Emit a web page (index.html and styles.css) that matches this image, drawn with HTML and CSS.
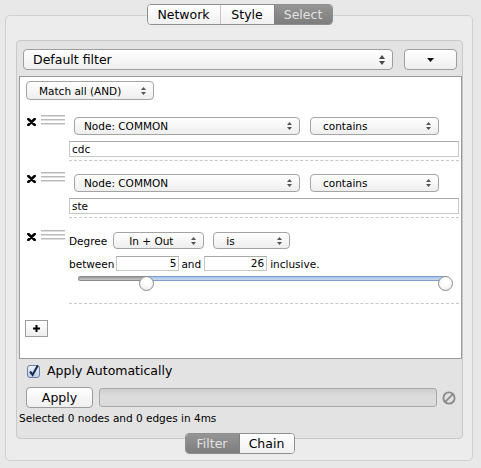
FILE: index.html
```html
<!DOCTYPE html>
<html>
<head>
<meta charset="utf-8">
<link rel="stylesheet" href="styles.css">
</head>
<body>
<div class="app">
  <div class="top-tabs">
    <div class="seg">
      <div class="seg-item w-net">Network</div>
      <div class="seg-item w-style">Style</div>
      <div class="seg-item on w-select">Select</div>
    </div>
  </div>
  <div class="outer">
    <div class="inner">
      <div class="filter-row">
        <div class="combo"><span>Default filter</span>
          <svg width="6" height="10" viewBox="0 0 6 10"><path d="M3 0L6 4H0Z M3 10L6 6H0Z" fill="#4a4a4a"/></svg>
        </div>
        <div class="menu-btn"><svg width="7" height="4" viewBox="0 0 7 4"><path d="M0 0H7L3.5 4Z" fill="#111"/></svg></div>
      </div>
      <div class="rules-box">
        <div class="select match"><span>Match all (AND)</span>
          <svg width="5" height="8" viewBox="0 0 5 8"><path d="M2.5 0L5 3H0Z M2.5 8L5 5H0Z" fill="#555"/></svg>
        </div>

        <div class="rule first">
          <div class="handle">
            <svg class="x-icon" width="9" height="8" viewBox="0 0 9 8"><path d="M1.3 1 L7.7 7 M7.7 1 L1.3 7" stroke="#000" stroke-width="2.5" stroke-linecap="round"/></svg>
            <div class="grip"></div>
          </div>
          <div class="rule-body">
            <div class="sel-line">
              <div class="select node"><span>Node: COMMON</span><svg width="5" height="8" viewBox="0 0 5 8"><path d="M2.5 0L5 3H0Z M2.5 8L5 5H0Z" fill="#555"/></svg></div>
              <div class="select contains"><span>contains</span><svg width="5" height="8" viewBox="0 0 5 8"><path d="M2.5 0L5 3H0Z M2.5 8L5 5H0Z" fill="#555"/></svg></div>
            </div>
            <div class="field">cdc</div>
          </div>
        </div>

        <div class="rule">
          <div class="handle">
            <svg class="x-icon" width="9" height="8" viewBox="0 0 9 8"><path d="M1.3 1 L7.7 7 M7.7 1 L1.3 7" stroke="#000" stroke-width="2.5" stroke-linecap="round"/></svg>
            <div class="grip"></div>
          </div>
          <div class="rule-body">
            <div class="sel-line">
              <div class="select node"><span>Node: COMMON</span><svg width="5" height="8" viewBox="0 0 5 8"><path d="M2.5 0L5 3H0Z M2.5 8L5 5H0Z" fill="#555"/></svg></div>
              <div class="select contains"><span>contains</span><svg width="5" height="8" viewBox="0 0 5 8"><path d="M2.5 0L5 3H0Z M2.5 8L5 5H0Z" fill="#555"/></svg></div>
            </div>
            <div class="field">ste</div>
          </div>
        </div>

        <div class="rule deg">
          <div class="handle">
            <svg class="x-icon" width="9" height="8" viewBox="0 0 9 8"><path d="M1.3 1 L7.7 7 M7.7 1 L1.3 7" stroke="#000" stroke-width="2.5" stroke-linecap="round"/></svg>
            <div class="grip"></div>
          </div>
          <div class="rule-body">
            <div class="deg-line">
              <span>Degree</span>
              <div class="select inout"><span>In + Out</span><svg width="5" height="8" viewBox="0 0 5 8"><path d="M2.5 0L5 3H0Z M2.5 8L5 5H0Z" fill="#555"/></svg></div>
              <div class="select is"><span>is</span><svg width="5" height="8" viewBox="0 0 5 8"><path d="M2.5 0L5 3H0Z M2.5 8L5 5H0Z" fill="#555"/></svg></div>
            </div>
            <div class="between-line">
              <span>between</span>
              <div class="num n1">5</div>
              <span class="and">and</span>
              <div class="num n2">26</div>
              <span class="incl">inclusive.</span>
            </div>
            <div class="slider">
              <div class="track">
                <div class="track-off"></div>
                <div class="track-on"></div>
              </div>
              <div class="thumb t-left"></div>
              <div class="thumb t-right"></div>
            </div>
          </div>
        </div>

        <div class="plus"><svg width="9" height="9" viewBox="0 0 9 9"><path d="M4.5 1V8 M1 4.5H8" stroke="#000" stroke-width="2"/></svg></div>
      </div>

      <div class="auto-row">
        <svg width="13" height="14" viewBox="0 0 13 14">
          <defs><linearGradient id="cbg" x1="0" y1="0" x2="0" y2="1"><stop offset="0" stop-color="#eef4fc"/><stop offset="1" stop-color="#b9cfec"/></linearGradient></defs>
          <rect x=".5" y="1.5" width="12" height="12" rx="2.5" fill="url(#cbg)" stroke="#6f7f97"/>
          <path d="M3 7.5 L5.6 10.8 L10.8 1.5" fill="none" stroke="#1b2c52" stroke-width="2.1"/>
        </svg>
        <span class="auto-label">Apply Automatically</span>
      </div>

      <div class="apply-row">
        <div class="apply-btn">Apply</div>
        <div class="progress"></div>
        <svg class="stop" width="14" height="14" viewBox="0 0 14 14"><circle cx="7" cy="7" r="5.6" fill="none" stroke="#8c8c8c" stroke-width="1.9"/><path d="M10.8 3.2 L3.2 10.8" stroke="#8c8c8c" stroke-width="1.9"/></svg>
      </div>

      <div class="status">Selected 0 nodes and 0 edges in 4ms</div>
    </div>
    <div class="bottom-tabs">
      <div class="seg">
        <div class="seg-item on w-filter">Filter</div>
        <div class="seg-item w-chain">Chain</div>
      </div>
    </div>
  </div>
</div>
</body>
</html>
```

FILE: styles.css
```css
* { box-sizing: border-box; }

body {
  margin: 0;
  background: #e8e8e8;
  font-family: "DejaVu Sans", "Liberation Sans", sans-serif;
  color: #000;
}

.app {
  padding: 4px 0 0 5px;
  width: 473px;
}

.top-tabs {
  display: flex;
  justify-content: center;
  position: relative;
  z-index: 1;
  margin-bottom: -10px;
  padding-left: 1px;
}

.seg {
  display: flex;
  height: 21px;
  border: 1px solid #8f8f8f;
  border-radius: 4px;
  overflow: hidden;
  background: #fff;
}

.seg-item {
  font-size: 12.5px;
  line-height: 19px;
  text-align: center;
  background: linear-gradient(#ffffff, #f0f0f0);
}

.seg-item + .seg-item { border-left: 1px solid #c6c6c6; }

.seg-item.on {
  background: linear-gradient(#959595, #7d7d7d);
  color: #e2e2e2;
}

.w-net { width: 72px; }
.w-style { width: 54px; }
.w-select { width: 58px; border-left-color: #808080 !important; }
.w-filter { width: 53px; }
.w-chain { width: 55px; border-left-color: #808080 !important; }

.outer {
  width: 468px;
  height: 446px;
  border: 1px solid #d0d0d0;
  border-radius: 5px;
  background: #ececec;
  padding: 24px 9px 0 10px;
}

.inner {
  height: 399px;
  border: 1px solid #c9c9c9;
  border-radius: 4px;
  background: #e3e3e3;
  padding: 8px 0 0 2px;
}

.filter-row {
  display: flex;
  margin-left: 4px;
  height: 21px;
}

.combo {
  width: 370px;
  height: 21px;
  display: flex;
  align-items: center;
  justify-content: space-between;
  padding: 0 7px 0 9px;
  border: 1px solid #9e9e9e;
  border-radius: 4px;
  background: linear-gradient(#ffffff, #efefef);
  font-size: 12.5px;
}

.menu-btn {
  width: 53px;
  height: 21px;
  margin-left: 11px;
  display: flex;
  align-items: center;
  justify-content: center;
  border: 1px solid #9e9e9e;
  border-radius: 4px;
  background: linear-gradient(#ffffff, #efefef);
}

.rules-box {
  margin-top: 6px;
  width: 443px;
  height: 283px;
  background: #fff;
  border: 1px solid #9a9a9a;
  padding-top: 4px;
}

.select {
  display: flex;
  align-items: center;
  justify-content: space-between;
  height: 18px;
  border: 1px solid #a4a4a4;
  border-radius: 4px;
  background: linear-gradient(#ffffff, #eeeeee);
  font-size: 10.5px;
  padding: 0 7px 0 12px;
  white-space: nowrap;
}

.match {
  width: 128px;
  height: 19px;
  margin-left: 6px;
}

.rule {
  display: grid;
  grid-template-columns: 49px 390px;
  margin-top: 13px;
}

.rule.first { margin-top: 17px; }
.rule.deg { margin-top: 14px; }

.handle {
  display: flex;
  align-items: flex-start;
  padding-left: 7px;
}

.x-icon { margin-top: 1px; }

.grip {
  margin-left: 5px;
  margin-top: -2px;
  width: 24px;
  height: 10px;
  background: repeating-linear-gradient(#b9b9b9 0 1px, #dedede 1px 2px, transparent 2px 4px);
}

.rule-body {
  border-bottom: 1px dashed #c8c8c8;
  padding-bottom: 3px;
}

.sel-line {
  display: flex;
  padding-left: 5px;
  gap: 10px;
}

.node { width: 226px; padding-left: 9px; }
.contains { width: 129px; }

.field {
  margin-top: 6px;
  height: 16px;
  border: 1px solid #c6c6c6;
  border-top-color: #aaaaaa;
  font-size: 10.5px;
  line-height: 14px;
  padding-left: 2px;
}

.deg .rule-body { padding-bottom: 12px; }

.deg-line {
  display: flex;
  align-items: center;
  height: 17px;
  font-size: 10.5px;
}

.inout {
  width: 91px;
  height: 17px;
  margin-left: 6px;
  padding-left: 15px;
}

.is {
  width: 77px;
  height: 17px;
  margin-left: 9px;
}

.between-line {
  display: flex;
  align-items: center;
  height: 15px;
  margin-top: 7px;
  font-size: 10.5px;
}

.num {
  width: 63px;
  height: 15px;
  border: 1px solid #c6c6c6;
  border-top-color: #aaaaaa;
  text-align: right;
  padding-right: 2px;
  line-height: 13px;
}

.n1 { margin-left: 2px; }
.and { margin-left: 2px; }
.n2 { margin-left: 3px; }
.incl { margin-left: 3px; }

.slider {
  position: relative;
  margin: 4px 0 0 9px;
  width: 375px;
  height: 15px;
}

.track {
  display: flex;
  margin-top: 5px;
  width: 370px;
  height: 5px;
}

.track-off {
  width: 68px;
  border: 1px solid #8c8c8c;
  border-right: none;
  border-radius: 3px 0 0 3px;
  background: linear-gradient(#9a9a9a, #c8c8c8);
}

.track-on {
  flex: 1;
  border: 1px solid #7f9fcb;
  border-left: none;
  border-radius: 0 3px 3px 0;
  background: linear-gradient(#a9c3e6, #c8daf2);
}

.thumb {
  position: absolute;
  top: 0;
  width: 15px;
  height: 15px;
  border-radius: 50%;
  border: 1px solid #8d8d8d;
  background: radial-gradient(circle at 50% 35%, #ffffff 30%, #e6e6e6 100%);
}

.t-left { left: 61px; }
.t-right { left: 360px; }

.plus {
  margin: 16px 0 0 5px;
  width: 23px;
  height: 17px;
  border: 1px solid #9c9c9c;
  background: linear-gradient(#ffffff, #eeeeee);
  display: flex;
  align-items: center;
  justify-content: center;
}

.auto-row {
  display: flex;
  align-items: center;
  height: 14px;
  margin: 5px 0 0 8px;
  font-size: 12.5px;
}

.auto-label { margin-left: 7px; line-height: 14px; }

.apply-row {
  display: flex;
  align-items: center;
  height: 21px;
  margin: 9px 0 0 7px;
}

.apply-btn {
  width: 67px;
  height: 21px;
  border: 1px solid #9c9c9c;
  border-radius: 4px;
  background: linear-gradient(#ffffff, #efefef);
  font-size: 12.5px;
  line-height: 19px;
  text-align: center;
}

.progress {
  width: 338px;
  height: 19px;
  margin-left: 6px;
  border: 1px solid #a8a8a8;
  border-radius: 3px;
  background: linear-gradient(#cdcdcd, #dcdcdc 40%, #dadada);
}

.stop { margin-left: 5px; }

.status {
  margin-top: 4px;
  font-size: 10.5px;
  line-height: 13px;
}

.bottom-tabs {
  display: flex;
  justify-content: center;
  margin-top: -6px;
  position: relative;
}
```
